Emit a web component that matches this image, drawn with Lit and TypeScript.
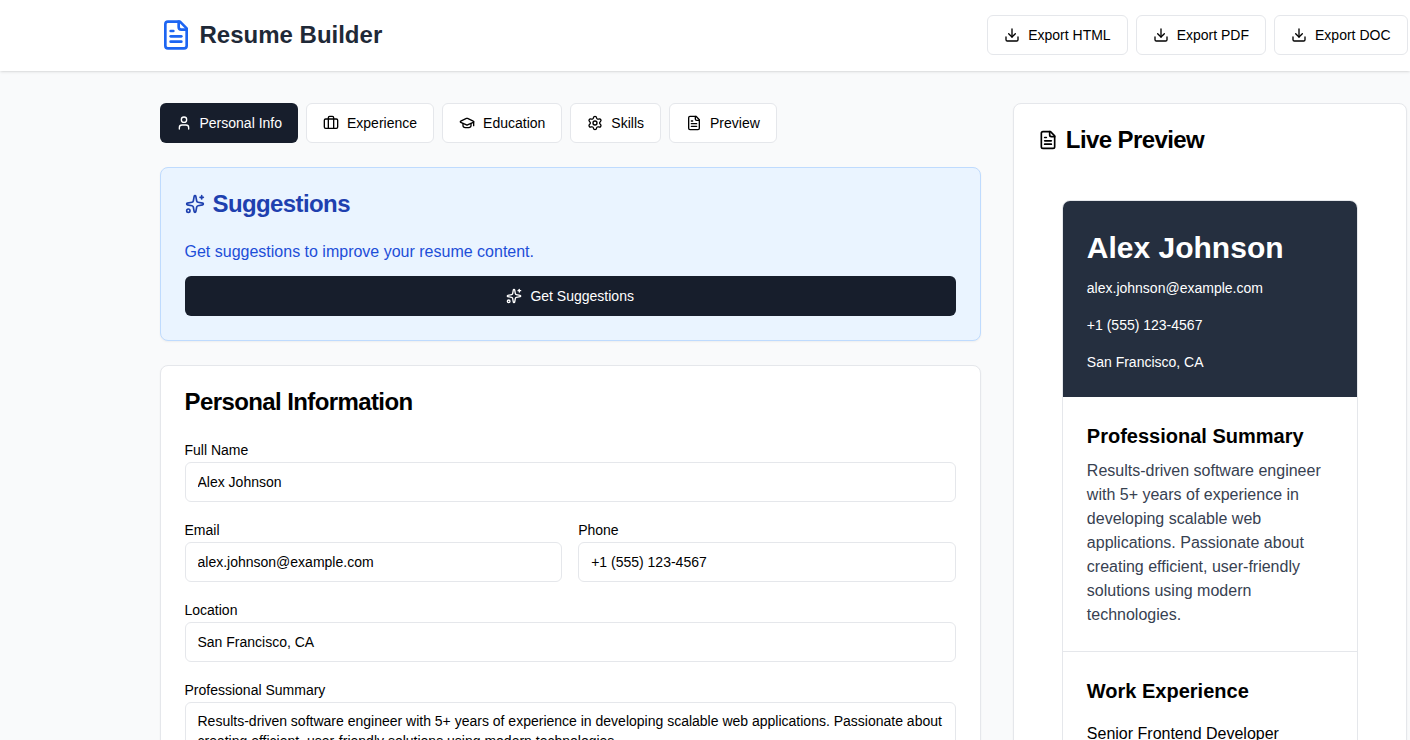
import { LitElement, html, css, svg } from "lit";
import { customElement, property, state } from "lit/decorators.js";
import { classMap } from "lit/directives/class-map.js";

const ICONS: Record<string, unknown> = {
  file: svg`<path d="M15 2H6a2 2 0 0 0-2 2v16a2 2 0 0 0 2 2h12a2 2 0 0 0 2-2V7Z"/><path d="M14 2v4a2 2 0 0 0 2 2h4"/><path d="M10 9H8"/><path d="M16 13H8"/><path d="M16 17H8"/>`,
  download: svg`<path d="M21 15v4a2 2 0 0 1-2 2H5a2 2 0 0 1-2-2v-4"/><polyline points="7 10 12 15 17 10"/><line x1="12" x2="12" y1="15" y2="3"/>`,
  user: svg`<path d="M19 21v-2a4 4 0 0 0-4-4H9a4 4 0 0 0-4 4v2"/><circle cx="12" cy="7" r="4"/>`,
  briefcase: svg`<path d="M16 20V4a2 2 0 0 0-2-2h-4a2 2 0 0 0-2 2v16"/><rect width="20" height="14" x="2" y="6" rx="2"/>`,
  cap: svg`<path d="M21.42 10.922a1 1 0 0 0-.019-1.838L12.83 5.18a2 2 0 0 0-1.66 0L2.6 9.08a1 1 0 0 0 0 1.832l8.57 3.908a2 2 0 0 0 1.66 0z"/><path d="M22 10v6"/><path d="M6 12.5V16a6 3 0 0 0 12 0v-3.5"/>`,
  gear: svg`<path d="M9.671 4.136a2.34 2.34 0 0 1 4.659 0 2.34 2.34 0 0 0 3.319 1.915 2.34 2.34 0 0 1 2.33 4.033 2.34 2.34 0 0 0 0 3.831 2.34 2.34 0 0 1-2.33 4.033 2.34 2.34 0 0 0-3.319 1.915 2.34 2.34 0 0 1-4.659 0 2.34 2.34 0 0 0-3.32-1.915 2.34 2.34 0 0 1-2.33-4.033 2.34 2.34 0 0 0 0-3.831A2.34 2.34 0 0 1 6.35 6.051a2.34 2.34 0 0 0 3.319-1.915"/><circle cx="12" cy="12" r="3"/>`,
  sparkles: svg`<path d="M11.017 2.814a1 1 0 0 1 1.966 0l1.051 5.558a2 2 0 0 0 1.594 1.594l5.558 1.051a1 1 0 0 1 0 1.966l-5.558 1.051a2 2 0 0 0-1.594 1.594l-1.051 5.558a1 1 0 0 1-1.966 0l-1.051-5.558a2 2 0 0 0-1.594-1.594l-5.558-1.051a1 1 0 0 1 0-1.966l5.558-1.051a2 2 0 0 0 1.594-1.594z"/><path d="M20 2v4"/><path d="M22 4h-4"/><circle cx="4" cy="20" r="2"/>`,
};

@customElement("ui-icon")
class UiIcon extends LitElement {
  @property() name = "file";
  static styles = css`
    :host { display: block; flex: none; width: 16px; height: 16px; }
    .glyph { display: block; width: 100%; height: 100%; fill: none; stroke: currentColor; stroke-width: 2; stroke-linecap: round; stroke-linejoin: round; }
  `;
  render() {
    return html`<svg class="glyph" viewBox="0 0 24 24">${ICONS[this.name]}</svg>`;
  }
}

const SUMMARY =
  "Results-driven software engineer with 5+ years of experience in developing scalable web applications. Passionate about creating efficient, user-friendly solutions using modern technologies.";

@customElement("app-root")
class AppRoot extends LitElement {
  @state() private tab = "Personal Info";
  @state() private data = {
    name: "Alex Johnson",
    email: "alex.johnson@example.com",
    phone: "+1 (555) 123-4567",
    location: "San Francisco, CA",
    summary: SUMMARY,
  };

  static styles = css`
    :host { display: block; height: 740px; overflow: hidden; background: #f9fafb; color: #000; font: 16px/24px "Liberation Sans", Arial, sans-serif; }
    * { box-sizing: border-box; }
    h1, h2, h3, p { margin: 0; }
    .header { background: #fff; padding: 15px 0 16px; box-shadow: 0 1px 3px rgba(0,0,0,.1), 0 1px 2px -1px rgba(0,0,0,.1); }
    .wrap { width: 1248px; margin-left: 159.5px; }
    .bar { display: flex; justify-content: space-between; align-items: center; }
    .brand { display: flex; align-items: center; gap: 8px; color: #1f2937; }
    .brand-icon { width: 32px; height: 32px; color: #1d65f2; }
    .brand-name { font-size: 24px; line-height: 32px; font-weight: 700; }
    .row { display: flex; gap: 8px; }
    .btn { display: inline-flex; align-items: center; justify-content: center; gap: 8px; height: 40px; padding: 0 16px; margin: 0; border: 1px solid #e5e7eb; border-radius: 6px; background: #fff; color: #000; font: 500 14px/20px "Liberation Sans", Arial, sans-serif; white-space: nowrap; }
    .btn.dark { border: 0; background: #171e2c; color: #fff; }
    .btn.wide { width: 100%; margin-top: 12px; }
    .grid { display: grid; grid-template-columns: repeat(3, minmax(0, 1fr)); gap: 32px; padding-top: 32px; align-items: start; }
    .left { grid-column: span 2; display: flex; flex-direction: column; gap: 24px; }
    .card { border: 1px solid #e5e7eb; border-radius: 8px; background: #fff; padding: 24px; box-shadow: 0 1px 2px rgba(0,0,0,.05); }
    .card.tip { border-color: #bfdbfe; background: #eaf4ff; color: #1d4ed8; }
    .card-title { display: flex; align-items: center; gap: 8px; margin-bottom: 24px; font-size: 24px; line-height: 24px; font-weight: 600; letter-spacing: -0.025em; }
    .tip .card-title { color: #1e40af; }
    .title-icon { width: 20px; height: 20px; }
    .form { display: grid; grid-template-columns: 1fr 1fr; gap: 16px; }
    .field { grid-column: span 2; min-width: 0; }
    .field.half { grid-column: span 1; }
    .field-label { font-size: 14px; line-height: 14px; font-weight: 500; }
    .input { display: block; width: 100%; height: 40px; padding: 8px 12px; border: 1px solid #e5e7eb; border-radius: 6px; background: #fff; color: #000; font: 14px/20px "Liberation Sans", Arial, sans-serif; outline: none; resize: none; }
    .input.area { height: 120px; }
    .preview { padding: 24px; }
    .sheet { border: 1px solid #e5e7eb; border-radius: 8px; overflow: hidden; }
    .sheet-head { background: #252f3f; color: #fff; padding: 24px; }
    .sheet-name { font-size: 30px; line-height: 45px; font-weight: 700; margin-bottom: 8px; }
    .contact { display: grid; gap: 16px; font-size: 14px; line-height: 21px; }
    .sheet-section { padding: 24px; }
    .sheet-section + .sheet-section { border-top: 1px solid #e5e7eb; }
    .sheet-title { font-size: 20px; line-height: 30px; font-weight: 600; margin-bottom: 8px; }
    .sheet-text { color: #374151; }
    .job { margin-top: 16px; }
  `;

  private field(label: string, key: "name" | "email" | "phone" | "location", half = false) {
    return html`<div class=${classMap({ field: true, half })}>
      <label class="field-label" for=${key}>${label}</label>
      <input class="input" id=${key} .value=${this.data[key]}
        @input=${(e: Event) => (this.data = { ...this.data, [key]: (e.target as HTMLInputElement).value })} />
    </div>`;
  }

  render() {
    const tabs = [["Personal Info", "user"], ["Experience", "briefcase"], ["Education", "cap"], ["Skills", "gear"], ["Preview", "file"]];
    const d = this.data;
    return html`
      <header class="header">
        <div class="wrap bar">
          <div class="brand"><ui-icon class="brand-icon" name="file"></ui-icon><h1 class="brand-name">Resume Builder</h1></div>
          <div class="row">
            ${["HTML", "PDF", "DOC"].map((f) => html`<button class="btn"><ui-icon name="download"></ui-icon>Export ${f}</button>`)}
          </div>
        </div>
      </header>
      <main class="wrap grid">
        <div class="left">
          <nav class="row">
            ${tabs.map(([t, i]) => html`<button class=${classMap({ btn: true, dark: t === this.tab })} @click=${() => (this.tab = t)}><ui-icon name=${i}></ui-icon>${t}</button>`)}
          </nav>
          <section class="card tip">
            <h2 class="card-title"><ui-icon class="title-icon" name="sparkles"></ui-icon>Suggestions</h2>
            <p>Get suggestions to improve your resume content.</p>
            <button class="btn dark wide"><ui-icon name="sparkles"></ui-icon>Get Suggestions</button>
          </section>
          <section class="card">
            <h2 class="card-title">Personal Information</h2>
            <div class="form">
              ${this.field("Full Name", "name")}
              ${this.field("Email", "email", true)}
              ${this.field("Phone", "phone", true)}
              ${this.field("Location", "location")}
              <div class="field">
                <label class="field-label" for="summary">Professional Summary</label>
                <textarea class="input area" id="summary" .value=${d.summary}
                  @input=${(e: Event) => (this.data = { ...d, summary: (e.target as HTMLTextAreaElement).value })}></textarea>
              </div>
            </div>
          </section>
        </div>
        <aside class="card">
          <h2 class="card-title"><ui-icon class="title-icon" name="file"></ui-icon>Live Preview</h2>
          <div class="preview">
            <article class="sheet">
              <div class="sheet-head">
                <h1 class="sheet-name">${d.name}</h1>
                <div class="contact"><p>${d.email}</p><p>${d.phone}</p><p>${d.location}</p></div>
              </div>
              <div class="sheet-section">
                <h2 class="sheet-title">Professional Summary</h2>
                <p class="sheet-text">${d.summary}</p>
              </div>
              <div class="sheet-section">
                <h2 class="sheet-title">Work Experience</h2>
                <p class="job">Senior Frontend Developer</p>
              </div>
            </article>
          </div>
        </aside>
      </main>
    `;
  }
}
